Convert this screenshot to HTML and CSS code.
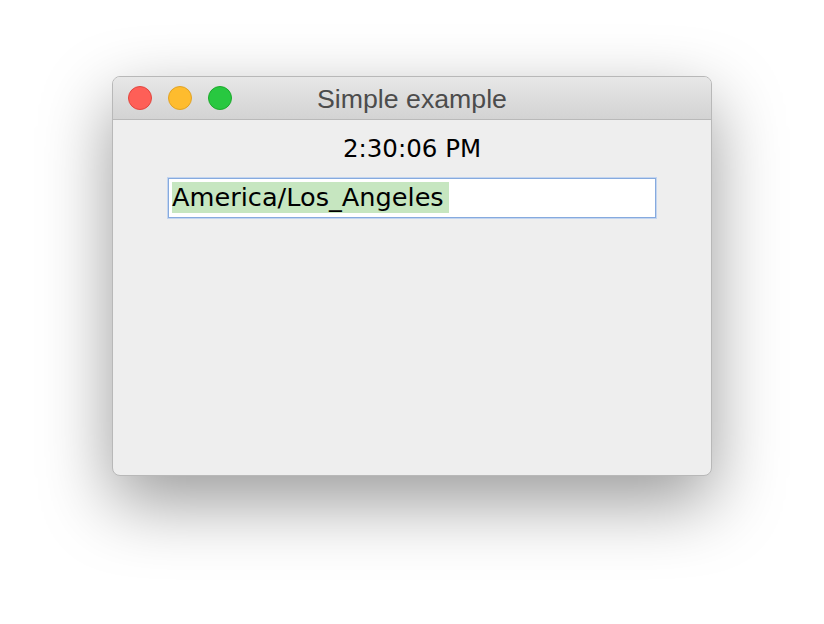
FILE: index.html
```html
<!doctype html>
<html>
  <head>
    <meta charset="utf-8" />
    <meta name="viewport" content="width=device-width, initial-scale=1" />
    <link rel="stylesheet" href="styles.css">
  </head>

  <body>
    <div class="window">
      <div class="titlebar">
        <div class="lights">
          <span class="light close"></span>
          <span class="light minimize"></span>
          <span class="light zoom"></span>
        </div>
        <div class="title">Simple example</div>
        <div></div>
      </div>
      <div class="content">
        <div class="clock">2:30:06 PM</div>
        <div class="field">
          <span class="selection">America/Los_Angeles</span>
        </div>
      </div>
    </div>
  </body>
</html>
```

FILE: styles.css
```css
html {
  background: #fff;
}

body {
  box-sizing: border-box;
  font-family: "DejaVu Sans", sans-serif;
  margin: 0;
  min-height: 100vh;
  padding-top: 76px;
}

.window {
  background: #eeeeee;
  border: 1px solid #b8b8b8;
  border-radius: 8px;
  box-shadow: 0 26px 70px rgba(0, 0, 0, 0.4);
  box-sizing: border-box;
  height: 400px;
  margin: 0 auto;
  overflow: hidden;
  width: 600px;
}

.titlebar {
  align-items: center;
  background: linear-gradient(#e7e7e7, #d3d3d3);
  border-bottom: 1px solid #b9b9b9;
  display: grid;
  grid-template-columns: 1fr auto 1fr;
  height: 42px;
}

.lights {
  display: flex;
  gap: 16px;
  padding-left: 15px;
}

.light {
  border-radius: 50%;
  box-sizing: border-box;
  height: 24px;
  width: 24px;
}

.close {
  background: #fe5f57;
  border: 1px solid #e2463f;
}

.minimize {
  background: #febc2e;
  border: 1px solid #e1a325;
}

.zoom {
  background: #28c840;
  border: 1px solid #1daa2c;
}

.title {
  color: #4c4c4c;
  font-family: "Liberation Sans", Arial, sans-serif;
  font-size: 26.7px;
  line-height: 30px;
  padding-top: 2px;
}

.content {
  display: flex;
  flex-direction: column;
  gap: 15px;
  padding: 15px 55px 0;
}

.clock {
  color: #000;
  font-size: 24.5px;
  line-height: 28px;
  text-align: center;
}

.field {
  background: #fff;
  border: 1px solid #86aade;
  box-shadow: 0 0 0 1px #c3d5f0;
  box-sizing: border-box;
  height: 40px;
  padding: 3px 3px 4px;
}

.selection {
  background: #c6e6c0;
  color: #000;
  display: inline-block;
  font-size: 25.6px;
  line-height: 31px;
  padding-right: 5px;
}
```
